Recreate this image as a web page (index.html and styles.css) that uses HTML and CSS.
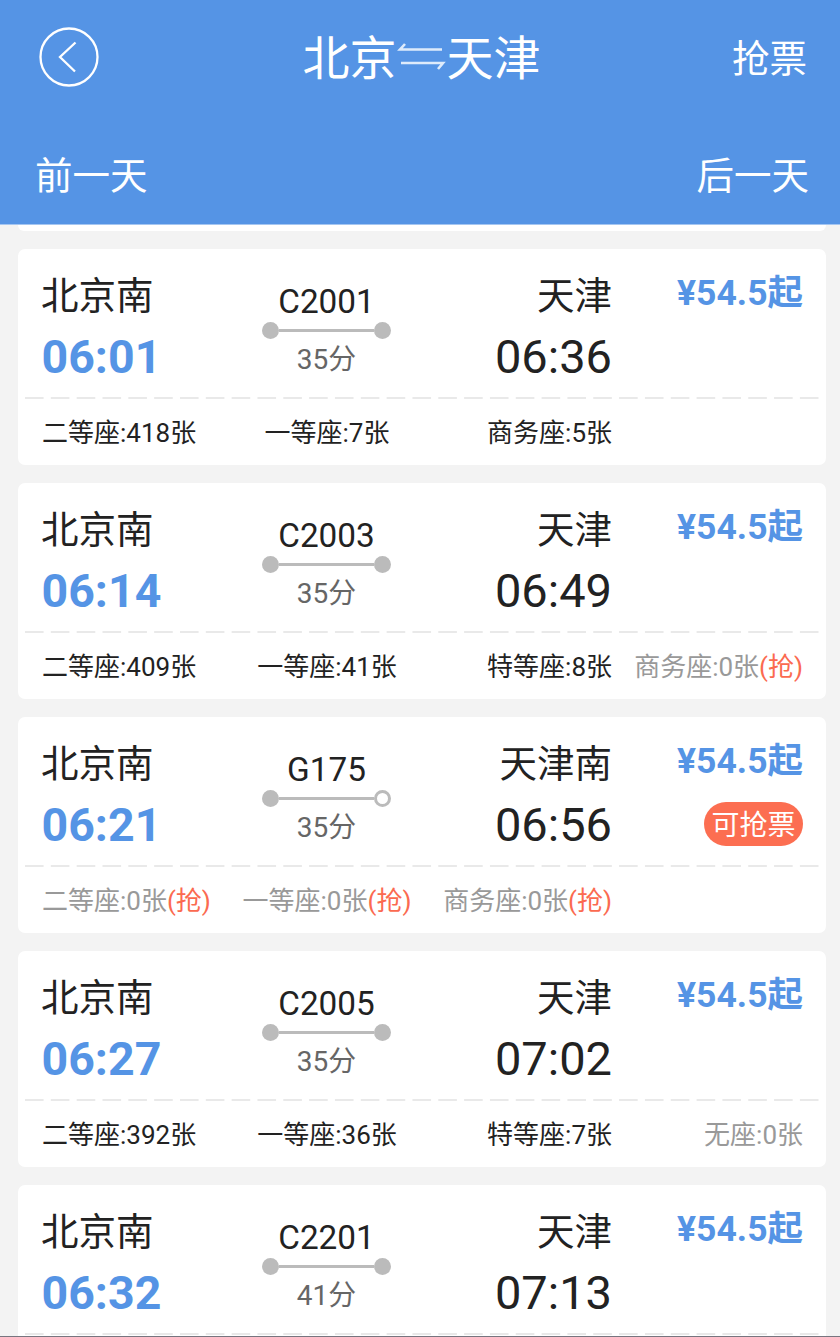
FILE: index.html
```html
<!DOCTYPE html>
<html lang="zh-CN">
<head>
<meta charset="utf-8">
<title>北京⇋天津</title>
<link rel="stylesheet" href="styles.css">
</head>
<body>
<div class="app">
<header class="header">
  <div class="nav">
    <svg class="back" width="60" height="60" viewBox="0 0 60 60"><circle cx="30" cy="30" r="28.5"/><path d="M36.5 15.5 L21 30 L36 44.5"/></svg>
    <h1 class="title"><span>北京</span><svg class="swap" width="50" height="36" viewBox="0 0 50 36"><path d="M45 11.5H3L8 6M4 25H46L41 31"/></svg><span>天津</span></h1>
    <span class="grab-link">抢票</span>
  </div>
  <div class="days"><span>前一天</span><span>后一天</span></div>
</header>
<main class="list">
  <div class="card peek"></div>

  <article class="card">
    <div class="trip">
      <div class="from"><div class="station">北京南</div><div class="time depart">06:01</div></div>
      <div class="via"><div class="code">C2001</div><div class="line"><i class="dot"></i><i class="rail"></i><i class="dot"></i></div><div class="duration">35分</div></div>
      <div class="to"><div class="station">天津</div><div class="time">06:36</div></div>
      <div class="side"><div class="price">¥54.5起</div></div>
    </div>
    <svg class="divider" width="794" height="2"><path d="M0 1H794"/></svg>
    <div class="seats"><span>二等座:418张</span><span>一等座:7张</span><span>商务座:5张</span></div>
  </article>

  <article class="card">
    <div class="trip">
      <div class="from"><div class="station">北京南</div><div class="time depart">06:14</div></div>
      <div class="via"><div class="code">C2003</div><div class="line"><i class="dot"></i><i class="rail"></i><i class="dot"></i></div><div class="duration">35分</div></div>
      <div class="to"><div class="station">天津</div><div class="time">06:49</div></div>
      <div class="side"><div class="price">¥54.5起</div></div>
    </div>
    <svg class="divider" width="794" height="2"><path d="M0 1H794"/></svg>
    <div class="seats"><span>二等座:409张</span><span>一等座:41张</span><span>特等座:8张</span><span class="none">商务座:0张<b>(抢)</b></span></div>
  </article>

  <article class="card">
    <div class="trip">
      <div class="from"><div class="station">北京南</div><div class="time depart">06:21</div></div>
      <div class="via"><div class="code">G175</div><div class="line"><i class="dot"></i><i class="rail"></i><i class="dot hollow"></i></div><div class="duration">35分</div></div>
      <div class="to"><div class="station">天津南</div><div class="time">06:56</div></div>
      <div class="side"><div class="price">¥54.5起</div><div class="badge">可抢票</div></div>
    </div>
    <svg class="divider" width="794" height="2"><path d="M0 1H794"/></svg>
    <div class="seats"><span class="none">二等座:0张<b>(抢)</b></span><span class="none">一等座:0张<b>(抢)</b></span><span class="none">商务座:0张<b>(抢)</b></span></div>
  </article>

  <article class="card">
    <div class="trip">
      <div class="from"><div class="station">北京南</div><div class="time depart">06:27</div></div>
      <div class="via"><div class="code">C2005</div><div class="line"><i class="dot"></i><i class="rail"></i><i class="dot"></i></div><div class="duration">35分</div></div>
      <div class="to"><div class="station">天津</div><div class="time">07:02</div></div>
      <div class="side"><div class="price">¥54.5起</div></div>
    </div>
    <svg class="divider" width="794" height="2"><path d="M0 1H794"/></svg>
    <div class="seats"><span>二等座:392张</span><span>一等座:36张</span><span>特等座:7张</span><span class="none">无座:0张</span></div>
  </article>

  <article class="card">
    <div class="trip">
      <div class="from"><div class="station">北京南</div><div class="time depart">06:32</div></div>
      <div class="via"><div class="code">C2201</div><div class="line"><i class="dot"></i><i class="rail"></i><i class="dot"></i></div><div class="duration">41分</div></div>
      <div class="to"><div class="station">天津</div><div class="time">07:13</div></div>
      <div class="side"><div class="price">¥54.5起</div></div>
    </div>
    <svg class="divider" width="794" height="2"><path d="M0 1H794"/></svg>
  </article>
</main>
</div>
</body>
</html>
```
FILE: styles.css
```css
* { box-sizing: border-box; }
body { margin: 0; background: #f3f3f3; }
.app {
  height: 1337px;
  overflow: hidden;
  display: flex;
  flex-direction: column;
  border-bottom: 1px solid #77757f;
  font-family: Roboto, "Noto Sans CJK SC", sans-serif;
  color: #222;
}
.header {
  flex: none;
  height: 225px;
  background: #5594e5;
  border-bottom: 1px solid #a5c6f1;
  color: #fff;
}
.nav {
  display: grid;
  grid-template-columns: 1fr auto 1fr;
  align-items: center;
  height: 113px;
  padding: 0 33px 0 39px;
}
.back { fill: none; stroke: #fff; stroke-width: 2.3; }
.title {
  display: flex;
  align-items: center;
  margin: 0 3px 0 0;
  padding-top: 4px;
  font-size: 47px;
  font-weight: 400;
  line-height: 60px;
}
.swap { margin: -6px 0 0; fill: none; stroke: #deebfb; stroke-width: 2.6; }
.grab-link { justify-self: end; padding-top: 4px; font-size: 37.5px; line-height: 50px; }
.days {
  display: flex;
  justify-content: space-between;
  padding: 38px 31px 0 35px;
  font-size: 37.5px;
  line-height: 50px;
}
.list {
  flex: 1;
  min-height: 0;
  display: flex;
  flex-direction: column;
  gap: 18px;
  padding: 0 14px 0 18px;
}
.card {
  flex: none;
  height: 216px;
  border-radius: 7px;
  background: #fff;
}
.peek { height: 6px; border-radius: 0 0 7px 7px; }
.trip {
  display: grid;
  grid-template-columns: 190px 190px 190px 191px;
  height: 148px;
  padding: 25px 23px 0 24px;
}
.station { margin-left: -1px; font-size: 37.5px; line-height: 44px; }
.time { margin-top: 15px; font-size: 47px; line-height: 48px; }
.depart { margin-left: -0.5px; font-size: 46.5px; font-weight: 700; color: #5594e5; }
.to { text-align: right; }
.via { margin-left: -1px; text-align: center; padding-top: 8px; }
.code { font-size: 33.3px; line-height: 40px; }
.line {
  display: flex;
  align-items: center;
  justify-content: center;
}
.dot {
  width: 17px;
  height: 17px;
  border-radius: 50%;
  background: #bbb;
}
.hollow { background: #fff; border: 3px solid #bbb; }
.rail { width: 95px; height: 3px; background: #bbb; }
.duration { margin-top: 3px; font-size: 28px; line-height: 36px; color: #666; }
.side { display: flex; flex-direction: column; align-items: flex-end; }
.price {
  font-size: 35.5px;
  line-height: 38px;
  font-weight: 700;
  color: #5594e5;
}
.badge {
  margin-top: 22px;
  width: 99px;
  height: 44px;
  border-radius: 22px;
  background: #fc6e51;
  color: #fff;
  font-size: 28px;
  line-height: 48px;
  text-align: center;
}
.divider { display: block; margin-left: 7px; }
.divider path { stroke: #e9e9e9; stroke-width: 2; stroke-dasharray: 18.6 7.23; }
.seats {
  display: grid;
  grid-template-columns: 190px 190px 190px 191px;
  padding: 16px 23px 0 24px;
  font-size: 26px;
  line-height: 36px;
  white-space: nowrap;
}
.seats span:nth-child(2) { justify-self: center; }
.seats span:nth-child(n+3) { justify-self: end; }
.none { color: #999; }
.none b { font-weight: 400; color: #fb6a50; }
```
